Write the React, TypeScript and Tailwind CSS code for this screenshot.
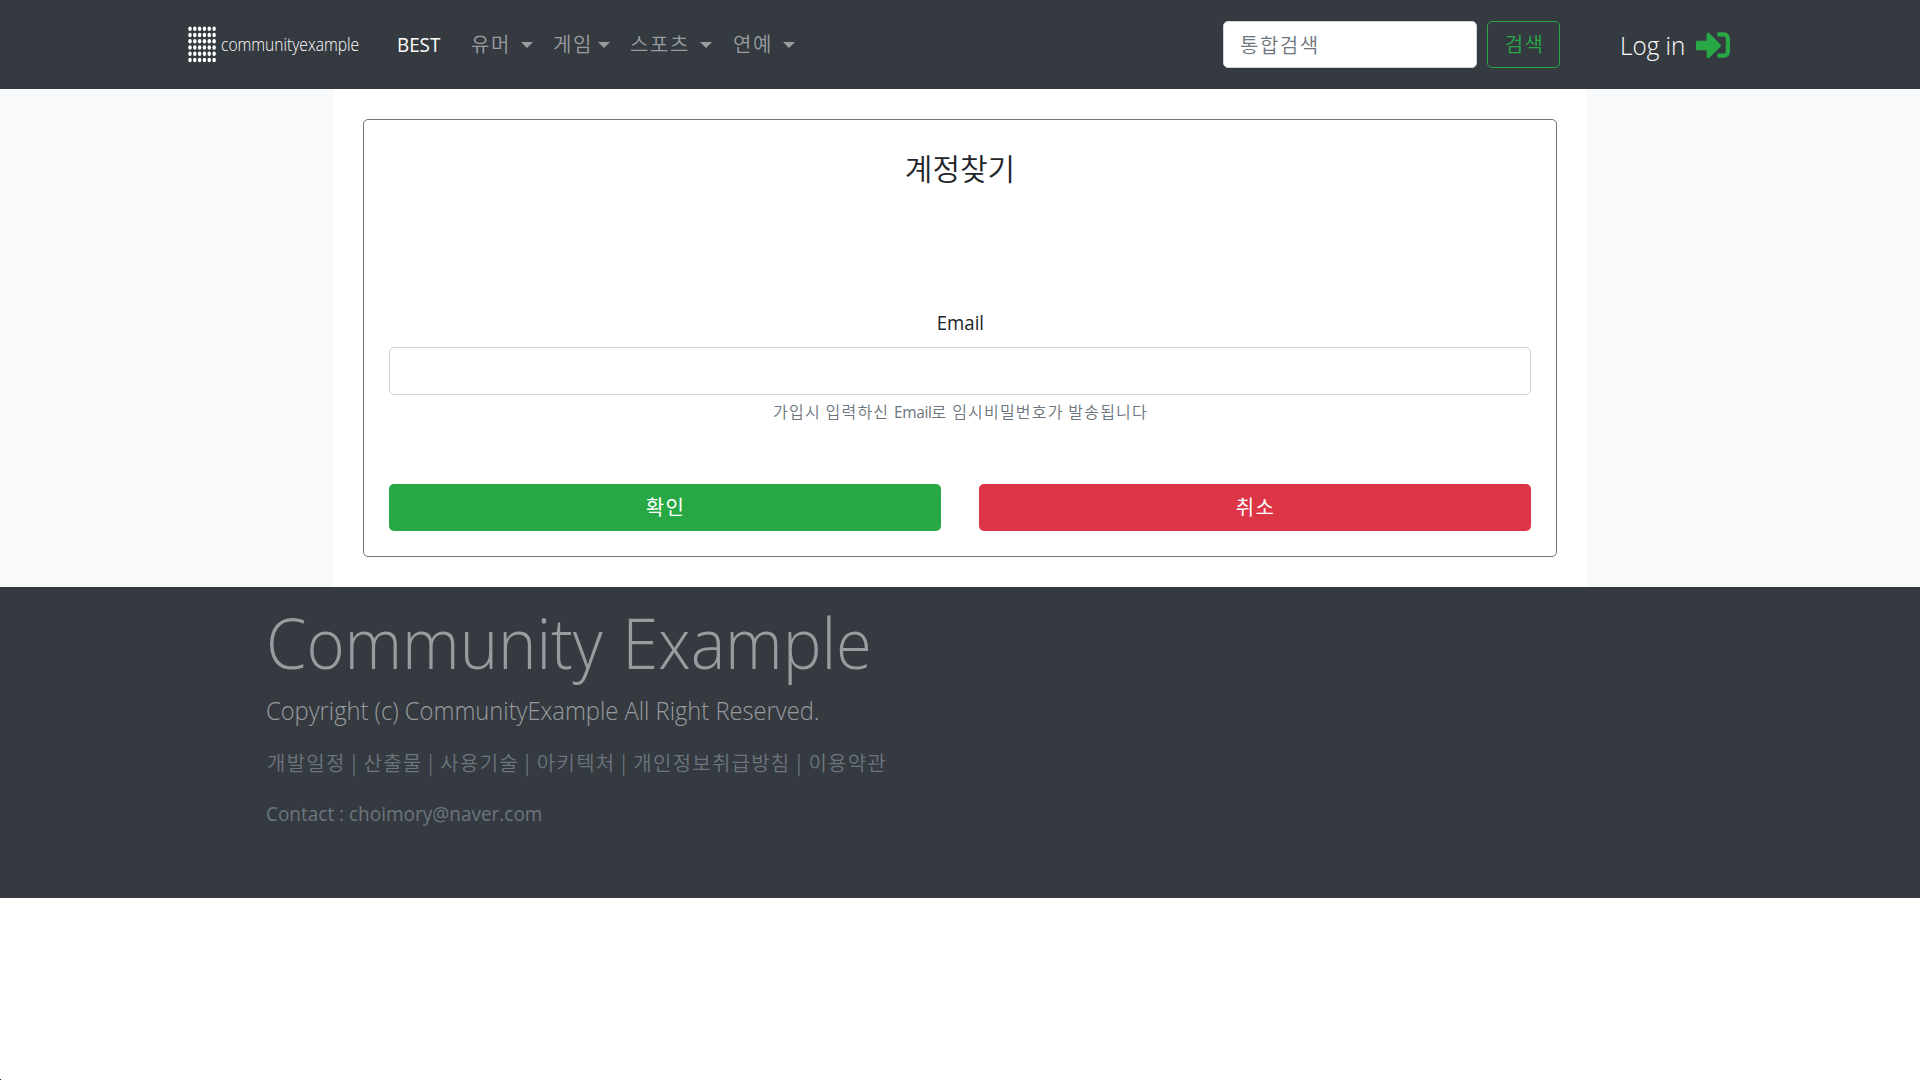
import { FaSignInAlt } from "react-icons/fa";

const HANGUL = "font-['Noto_Sans_CJK_KR',sans-serif]";

function Logo() {
  const steps = [0, 1, 2, 3, 4, 5];
  return (
    <a className="flex w-[172px] items-center">
      <svg width="28" height="37" viewBox="0 0 28 37" className="shrink-0" fill="#fff">
        {steps.map((row) =>
          steps.map((col) => (
            <ellipse key={`${row}-${col}`} cx={2 + col * 4.82} cy={2.7 + row * 6.25} rx="1.75" ry="2.25" />
          )),
        )}
      </svg>
      <span className="mb-[2px] ml-[5px] inline-block origin-left scale-x-[0.82] whitespace-nowrap text-[19px] leading-6 font-light text-white">
        communityexample
      </span>
    </a>
  );
}

function Caret() {
  return <span className="h-0 w-0 border-x-[6px] border-t-[6px] border-x-transparent border-t-[#9a9da0]" />;
}

function MenuItem({ label, tight, className }: { label: string; tight?: boolean; className: string }) {
  return (
    <a className={`flex items-center ${tight ? "gap-[5px]" : "gap-[10px]"} ${className}`}>
      <span className={`${HANGUL} mb-[2px] text-[20px] leading-[30px] font-[350] tracking-[1.6px] whitespace-nowrap`}>
        {label}
      </span>
      <Caret />
    </a>
  );
}

function Navbar() {
  return (
    <header className="flex h-[89px] shrink-0 items-center bg-[#343a40] pl-[188px]">
      <Logo />
      <nav className="flex items-center text-[#9a9da0]">
        <a className="ml-[37px] w-[74px] text-[20px] leading-[30px] text-white">
          <span className="inline-block origin-left scale-x-[0.94]">BEST</span>
        </a>
        <MenuItem label="유머" className="w-[82px]" />
        <MenuItem label="게임" tight className="w-[77px]" />
        <MenuItem label="스포츠" className="w-[103px]" />
        <MenuItem label="연예" className="w-[90px]" />
      </nav>
      <form className="ml-[400px] flex gap-[10px]">
        <input
          placeholder="통합검색"
          className="h-[47px] w-[254px] rounded-[5px] border border-[#ced4da] bg-white px-4 font-['Noto_Sans_CJK_KR',sans-serif] text-[20px] font-[350] tracking-[1.5px] text-[#495057] placeholder:text-[#6c757d]"
        />
        <button
          type="button"
          className="h-[47px] w-[73px] rounded-[5px] border border-[#28a745] pb-[2px] pl-[2px] font-['Noto_Sans_CJK_KR',sans-serif] text-[20px] font-[350] tracking-[1.4px] text-[#28a745]"
        >
          검색
        </button>
      </form>
      <a className="ml-[60px] flex items-center text-white">
        <span className="mt-px inline-block w-[76px] origin-left scale-x-[0.97] text-[25px] leading-[38px] font-light whitespace-nowrap">
          Log in
        </span>
        <FaSignInAlt className="h-[34px] w-[34px] text-[#28a745]" />
      </a>
    </header>
  );
}

function FindAccountForm() {
  return (
    <form className="flex h-[438px] flex-col rounded-[5px] border border-[#6c757d] px-[25px] text-center text-[#212529]">
      <h1 className={`${HANGUL} mt-[29px] text-[30px] leading-9 font-[350]`}>계정찾기</h1>
      <label className="mt-[123px] text-[20px] leading-[30px]">
        <span className="inline-block scale-x-[0.93]">Email</span>
      </label>
      <input className="mt-[9px] h-[48px] w-full rounded-[5px] border border-[#ced4da] bg-white" />
      <small className={`${HANGUL} mt-[4px] pl-px text-[16px] leading-6 font-[350] tracking-[1.2px] text-[#6c757d]`}>
        가입시 입력하신{" "}
        <span className="font-['Open_Sans',sans-serif] text-[15.5px] font-normal tracking-[-0.4px]">Email</span>로
        임시비밀번호가 발송됩니다
      </small>
      <div className={`${HANGUL} mt-[60px] grid grid-cols-2 gap-[38px] text-[20px] tracking-[1.4px] text-white`}>
        <button type="button" className="h-[47px] rounded-[5px] bg-[#28a745] pb-[2px] pl-px">
          확인
        </button>
        <button type="button" className="h-[47px] rounded-[5px] bg-[#dc3545] pb-[2px] pl-px">
          취소
        </button>
      </div>
    </form>
  );
}

function Footer() {
  return (
    <footer className="h-[311px] shrink-0 bg-[#343a40] pl-[267px] whitespace-nowrap">
      <h2 className="-ml-px origin-left scale-x-[0.932] pt-[13px] text-[70px] leading-[84px] font-light tracking-[-0.1px] text-[#999c9f] [word-spacing:3px]">
        Community Example
      </h2>
      <p className="mt-[7px] -ml-px origin-left scale-x-[0.948] text-[25px] leading-[38px] font-light text-[#999c9f]">
        Copyright (c) CommunityExample All Right Reserved.
      </p>
      <p className={`${HANGUL} mt-[19px] text-[20px] leading-[30px] font-[350] tracking-[1.24px] text-[#6c757d]`}>
        개발일정 | 산출물 | 사용기술 | 아키텍처 | 개인정보취급방침 | 이용약관
      </p>
      <p className="mt-[21px] -ml-px origin-left scale-x-[0.949] text-[20px] leading-[30px] text-[#6c757d]">
        Contact : choimory@naver.com
      </p>
    </footer>
  );
}

export default function App() {
  return (
    <div className="flex h-screen w-full flex-col overflow-hidden bg-white font-['Open_Sans','Noto_Sans_CJK_KR',sans-serif]">
      <Navbar />
      <main className="flex h-[498px] shrink-0 justify-center bg-[#f8f9fa]">
        <section className="w-[1254px] bg-white px-[30px] py-[30px]">
          <FindAccountForm />
        </section>
      </main>
      <Footer />
      <div className="mt-auto h-px w-px bg-[#212529]" />
    </div>
  );
}
